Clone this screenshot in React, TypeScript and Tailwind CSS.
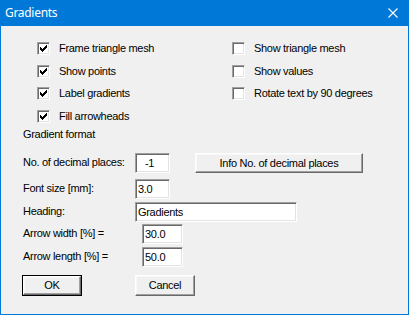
const SUNKEN =
  "border border-t-[#a0a0a0] border-l-[#a0a0a0] border-b-white border-r-white shadow-[inset_1px_1px_0_#696969,inset_-1px_-1px_0_#e3e3e3] bg-white";

const RAISED =
  "border border-t-white border-l-white border-b-[#696969] border-r-[#696969] shadow-[inset_-1px_-1px_0_#a0a0a0,inset_1px_1px_0_#f8f8f8] bg-[#f0f0f0]";

const LEFT_OPTIONS = [
  { label: "Frame triangle mesh", checked: true, h: "h-[23px]" },
  { label: "Show points", checked: true, h: "h-[22px]" },
  { label: "Label gradients", checked: true, h: "h-[23px]" },
  { label: "Fill arrowheads", checked: true, h: "h-[23px]" },
];

const RIGHT_OPTIONS = [
  { label: "Show triangle mesh", checked: false, h: "h-[23px]" },
  { label: "Show values", checked: false, h: "h-[22px]" },
  { label: "Rotate text by 90 degrees", checked: false, h: "h-[23px]" },
];

// classic 3px-thick tick, one column of pixels at a time
const TICK = [
  [3, 5], [4, 6], [5, 7], [6, 6], [7, 5], [8, 4], [9, 3],
];

function Check({ checked }: { checked: boolean }) {
  return (
    <span className={`relative block h-[13px] w-[13px] shrink-0 ${SUNKEN}`}>
      {checked && (
        <svg
          width="13"
          height="13"
          viewBox="0 0 13 13"
          className="absolute -left-px -top-px"
          shapeRendering="crispEdges"
        >
          {TICK.map(([x, y]) => (
            <rect key={x} x={x} y={y} width="1" height="3" fill="#000" />
          ))}
        </svg>
      )}
    </span>
  );
}

function Option({ label, checked, h }: { label: string; checked: boolean; h: string }) {
  return (
    <div className={`flex items-center gap-[9px] ${h}`}>
      <Check checked={checked} />
      <span>{label}</span>
    </div>
  );
}

function Field({ value, w, pad = "pl-[2px]" }: { value: string; w: string; pad?: string }) {
  return (
    <div className={`flex h-[20px] items-center ${w} ${pad} ${SUNKEN}`}>
      {value}
    </div>
  );
}

export default function App() {
  return (
    <div
      className="flex h-[315px] w-[409px] flex-col border-x border-b border-[#0078d7] bg-[#f0f0f0] text-[11px] leading-none tracking-[-0.3px] text-black"
      style={{ fontFamily: '"Liberation Sans", Arial, sans-serif' }}
    >
      {/* title bar */}
      <div className="-mx-px flex h-[26px] shrink-0 items-center justify-between bg-[#0078d7] pl-[5px] pr-[11px] text-white">
        <span
          className="text-[12px] tracking-[-0.3px]"
          style={{ fontFamily: '"Noto Sans", "Liberation Sans", sans-serif' }}
        >
          Gradients
        </span>
        <svg width="10" height="10" viewBox="0 0 10 10" className="mb-[1px]">
          <path d="M0.5 0.5 L9.5 9.5 M9.5 0.5 L0.5 9.5" stroke="#fff" strokeWidth="1.1" />
        </svg>
      </div>

      {/* options */}
      <div className="flex pl-[36px] pt-[11px]">
        <div className="flex w-[195px] flex-col">
          {LEFT_OPTIONS.map((o) => (
            <Option key={o.label} {...o} />
          ))}
        </div>
        <div className="flex flex-col">
          {RIGHT_OPTIONS.map((o) => (
            <Option key={o.label} {...o} />
          ))}
        </div>
      </div>

      {/* gradient format */}
      <div className="flex flex-col pl-[22px]">
        <div className="flex h-[12px] items-end">Gradient format</div>

        <div className="mt-[13px] flex h-[20px] items-center">
          <span className="w-[112px] pb-[2px]">No. of decimal places:</span>
          <Field value="-1" w="w-[35px]" pad="pl-[9px]" />
          <button className={`ml-[25px] h-[20px] w-[168px] ${RAISED}`}>
            Info No. of decimal places
          </button>
        </div>

        <div className="mt-[6px] flex h-[20px] items-center">
          <span className="w-[112px] pb-[2px]">Font size [mm]:</span>
          <Field value="3.0" w="w-[35px]" />
        </div>

        <div className="mt-[3px] flex h-[20px] items-center">
          <span className="w-[112px] pb-[2px]">Heading:</span>
          <Field value="Gradients" w="w-[162px]" />
        </div>

        <div className="mt-[2px] flex h-[20px] items-center">
          <span className="w-[119px] pb-[2px]">Arrow width [%] =</span>
          <Field value="30.0" w="w-[41px]" />
        </div>

        <div className="mt-[3px] flex h-[20px] items-center">
          <span className="w-[119px] pb-[2px]">Arrow length [%] =</span>
          <Field value="50.0" w="w-[41px]" />
        </div>
      </div>

      {/* buttons */}
      <div className="mt-[8px] flex gap-[53px] pl-[21px]">
        <div className="h-[21px] w-[60px] border border-black">
          <button className={`block h-full w-full ${RAISED}`}>OK</button>
        </div>
        <button className={`h-[21px] w-[60px] ${RAISED}`}>Cancel</button>
      </div>
    </div>
  );
}
